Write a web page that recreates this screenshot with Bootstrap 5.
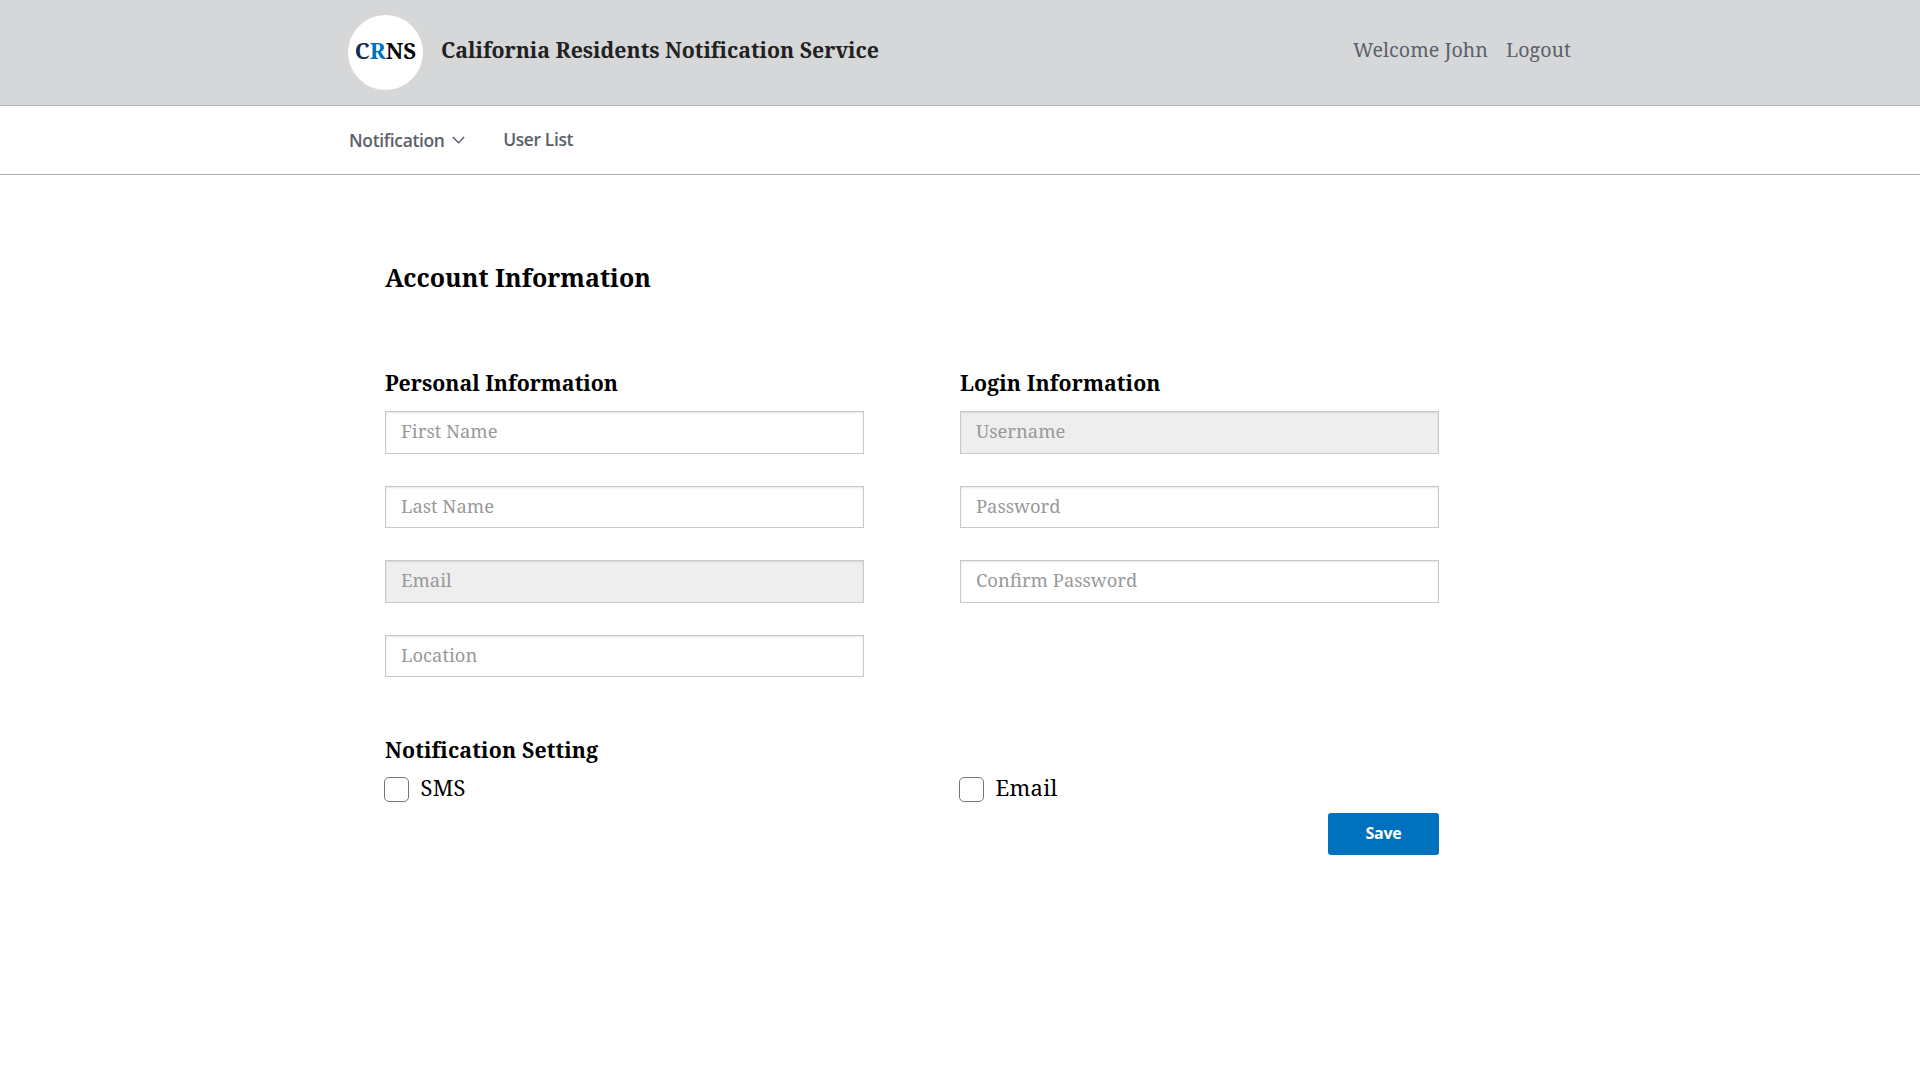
<!DOCTYPE html>
<html lang="en">
<head>
<meta charset="utf-8">
<meta name="viewport" content="width=device-width, initial-scale=1">
<title>California Residents Notification Service</title>
<link href="https://cdn.jsdelivr.net/npm/bootstrap@5.3.0/dist/css/bootstrap.min.css" rel="stylesheet">
<style>
  body { font-family: "Noto Serif", "DejaVu Serif Condensed", serif; color: #000; background: #fff; }
  .page-width { max-width: 1224px; }
  .site-header { height: 106px; background: #d6d7d9; border-bottom: 1px solid #aeb0b5; }
  .logo { width: 75px; height: 75px; font-size: 22.2px; padding-bottom: 3px; letter-spacing: .1px; }
  .logo .c { color: #112e51; }
  .logo .r { color: #0071bc; }
  .site-title { font-size: 21.3px; line-height: 24px; color: #212121; margin-left: 18px; padding-bottom: 6px; letter-spacing: -.03px; }
  .user-links { gap: 18px; font-size: 19.6px; line-height: 24px; padding: 0 1px 6px 0; letter-spacing: .05px; }
  .user-links a, .site-nav a { color: #5b616b; text-decoration: none; }
  .site-nav { height: 69px; border-bottom: 1px solid #aeb0b5; }
  .site-nav .page-width { padding-left: 1px; }
  .site-nav .nav-link { font: 600 17.4px/24px "Open Sans", "Noto Sans", sans-serif; letter-spacing: -.3px; padding: 0; }
  .site-nav .nav-link + .nav-link { margin-left: 38.5px; padding-bottom: 2px; letter-spacing: -.35px; }
  .chevron { width: 13px; height: 8px; margin-left: 7px; }
  .account { width: 1054px; margin-left: 385px; padding-top: 87px; }
  .account h1 { font-size: 25px; line-height: 30px; font-weight: 700; margin-bottom: 78px; }
  .account h2 { font-size: 21.3px; line-height: 26px; font-weight: 700; margin-bottom: 15.2px; }
  .account .login-title { letter-spacing: .1px; }
  .form-row { --bs-gutter-x: 96px; }
  .account .form-control { height: 42.33px; margin-bottom: 32.3px; padding: 0 15px 3.4px; border: 1px solid #c7c9cb; border-radius: 0; font-size: 18.4px; box-shadow: inset 0 1px 2px rgba(0,0,0,.1); }
  .account .form-control::placeholder { color: #999; opacity: 1; }
  .account .form-control:disabled { background: #eee; }
  .account h2.setting-title { margin: 27px 0 14px; letter-spacing: .14px; }
  .account .form-check-input { width: 25px; height: 25px; margin: 0 0 0 -1px; border: 1px solid #767676; border-radius: 5px; float: none; }
  .account .form-check { height: 25px; min-height: 25px; margin: 0; padding: 0; }
  .account .form-check-label { font-size: 22px; line-height: 22px; margin-left: 11.5px; padding-bottom: 5px; letter-spacing: .25px; }
  .save-btn { width: 111px; height: 42px; margin-top: 11px; padding: 0 0 2px; background: #0071bc; color: #fff; border: 0; border-radius: 3px; font: 700 16px/20px "Open Sans", "Noto Sans", sans-serif; letter-spacing: -.2px; }
</style>
</head>
<body>
<header class="site-header">
  <div class="page-width mx-auto h-100 d-flex align-items-center">
    <div class="logo rounded-circle bg-white fw-bold d-flex align-items-center justify-content-center"><span><span class="c">C</span><span class="r">R</span>NS</span></div>
    <div class="site-title fw-bold">California Residents Notification Service</div>
    <div class="user-links ms-auto d-flex"><a href="#">Welcome John</a><a href="#">Logout</a></div>
  </div>
</header>
<nav class="site-nav">
  <div class="page-width mx-auto h-100 d-flex align-items-center">
    <a class="nav-link d-flex align-items-center" href="#">Notification
      <svg class="chevron" viewBox="0 0 13 8" fill="none" stroke="#5b616b" stroke-width="1.4"><path d="M.8 1 6.5 6.8 12.2 1"/></svg></a>
    <a class="nav-link" href="#">User List</a>
  </div>
</nav>
<main class="account">
  <h1>Account Information</h1>
  <form>
    <div class="row form-row">
      <div class="col-6">
        <h2>Personal Information</h2>
        <input class="form-control" placeholder="First Name">
        <input class="form-control" placeholder="Last Name">
        <input class="form-control" placeholder="Email" disabled>
        <input class="form-control" placeholder="Location">
      </div>
      <div class="col-6">
        <h2 class="login-title">Login Information</h2>
        <input class="form-control" placeholder="Username" disabled>
        <input class="form-control" type="password" placeholder="Password">
        <input class="form-control" type="password" placeholder="Confirm Password">
      </div>
    </div>
    <h2 class="setting-title">Notification Setting</h2>
    <div class="row form-row">
      <div class="col-6"><div class="form-check d-flex align-items-center">
        <input class="form-check-input" type="checkbox" id="sms"><label class="form-check-label" for="sms">SMS</label>
      </div></div>
      <div class="col-6"><div class="form-check d-flex align-items-center">
        <input class="form-check-input" type="checkbox" id="mail"><label class="form-check-label" for="mail">Email</label>
      </div></div>
    </div>
    <div class="d-flex justify-content-end"><button class="btn save-btn" type="button">Save</button></div>
  </form>
</main>
<script src="https://cdn.jsdelivr.net/npm/bootstrap@5.3.0/dist/js/bootstrap.bundle.min.js"></script>
</body>
</html>
